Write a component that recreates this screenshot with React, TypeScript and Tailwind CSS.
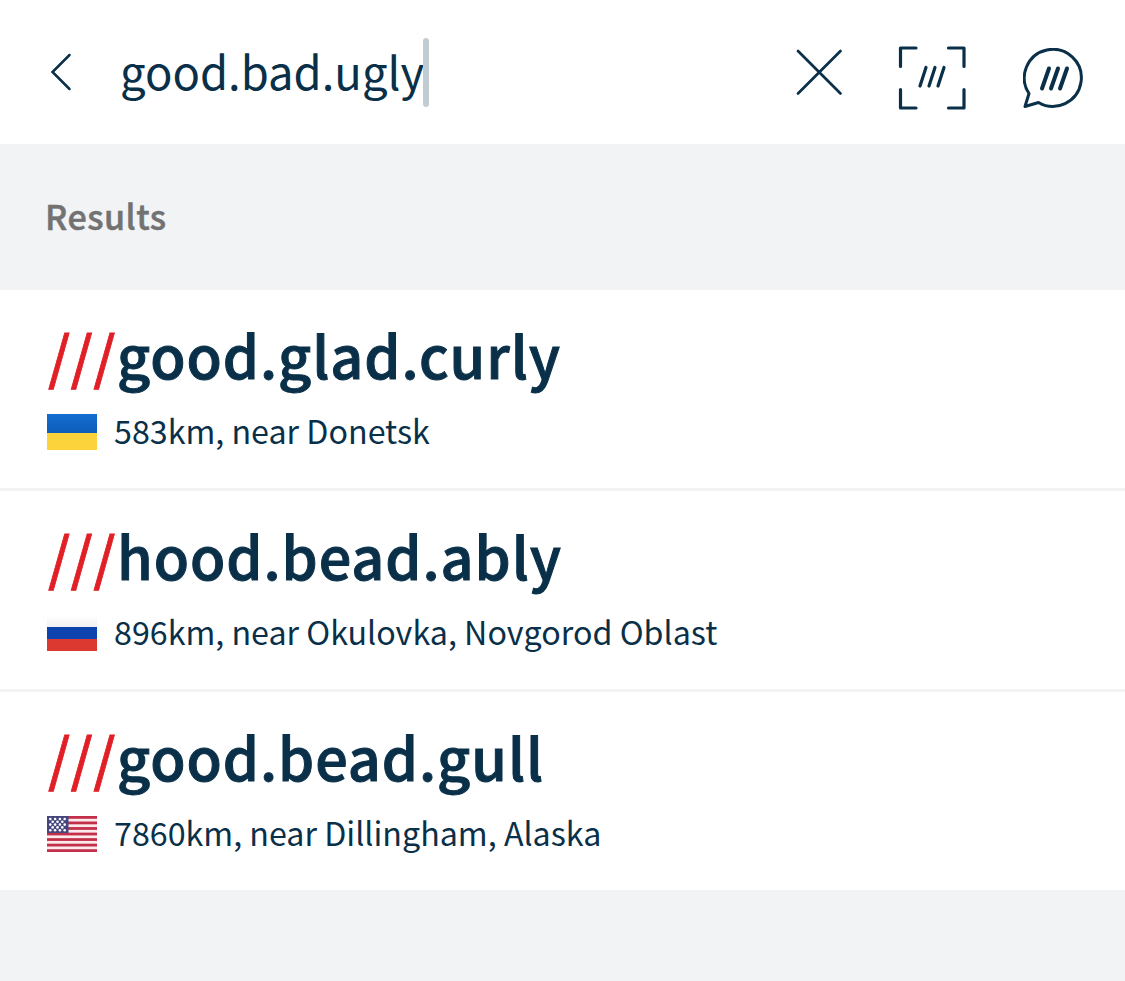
import type { ReactNode } from "react";

const font = "font-['Noto_Sans_CJK_SC','Noto_Sans',sans-serif]";

function BackIcon() {
  return (
    <svg width="22" height="38" viewBox="0 0 22 38" fill="none" stroke="currentColor" strokeWidth="2.5" strokeLinecap="round">
      <path d="M19.500 2 2.500 19l17 17" />
    </svg>
  );
}

function CloseIcon() {
  return (
    <svg width="48" height="48" viewBox="0 0 48 48" fill="none" stroke="currentColor" strokeWidth="2.7" strokeLinecap="round">
      <path d="M3 3l42.500 42.500M45.500 3 3 45.500" />
    </svg>
  );
}

function ScanIcon() {
  return (
    <svg width="68" height="64" viewBox="0 0 68 64" fill="none" stroke="currentColor" strokeWidth="3.2" strokeLinecap="round" strokeLinejoin="round">
      <path d="M2.500 20.500V2H18M50.500 2H66V20.500M66 43.500V62H50.500M18 62H2.500V43.500" />
      <path d="M28 21.500 22 40M37 21.500 31 40M46 21.500 40 40" />
    </svg>
  );
}

function ChatIcon() {
  return (
    <svg width="62" height="62" viewBox="0 0 62 62" fill="none" stroke="currentColor" strokeWidth="3" strokeLinecap="round" strokeLinejoin="round">
      <path d="M6 45.500A28.500 28.500 0 1 1 15.500 54.500L2 58.500Z" />
      <path d="M26 20.500 19 40.500M35 20.500 28 40.500M44 20.500 37 40.500" strokeWidth="4" />
    </svg>
  );
}

function UkraineFlag() {
  return (
    <svg width="50" height="36" viewBox="0 0 50 36">
      <defs>
        <linearGradient id="ua-blue" x2="0" y2="1">
          <stop stopColor="#156dd1" />
          <stop offset="1" stopColor="#0d5dba" />
        </linearGradient>
      </defs>
      <rect width="50" height="19" fill="url(#ua-blue)" />
      <rect y="19" width="50" height="17" fill="#fdd33c" />
    </svg>
  );
}

function RussiaFlag() {
  return (
    <svg width="50" height="36" viewBox="0 0 50 36">
      <defs>
        <linearGradient id="ru-white" x2="0" y2="1">
          <stop stopColor="#fff" />
          <stop offset="1" stopColor="#f1f1f1" />
        </linearGradient>
      </defs>
      <rect width="50" height="12" fill="url(#ru-white)" />
      <rect y="12" width="50" height="12" fill="#0c43ae" />
      <rect y="24" width="50" height="12" fill="#dc3a31" />
    </svg>
  );
}

function UsaFlag() {
  return (
    <svg width="50" height="36" viewBox="0 0 50 36">
      <rect width="50" height="36" fill="#fbe9ec" />
      {[0, 1, 2, 3, 4, 5, 6].map((i) => (
        <rect key={i} y={i * 5.54} width="50" height="2.77" fill="#c22f48" />
      ))}
      <rect width="21.500" height="17" fill="#46467f" />
      {[3, 5.8, 8.6, 11.4, 14.2].map((y, row) =>
        (row % 2 ? [5.7, 10.5, 15.3] : [3.3, 8.1, 12.9, 17.7]).map((x) => (
          <circle key={`${x}-${y}`} cx={x} cy={y} r="1.300" fill="#fff" />
        )),
      )}
    </svg>
  );
}

const results: { words: string; place: string; flag: ReactNode }[] = [
  { words: "good.glad.curly", place: "583km, near Donetsk", flag: <UkraineFlag /> },
  { words: "hood.bead.ably", place: "896km, near Okulovka, Novgorod Oblast", flag: <RussiaFlag /> },
  { words: "good.bead.gull", place: "7860km, near Dillingham, Alaska", flag: <UsaFlag /> },
];

export default function App() {
  return (
    <div className={`h-[981px] w-[1125px] overflow-hidden bg-[#f1f3f5] text-[#0a3049] ${font}`}>
      <header className="flex h-36 items-center bg-white pr-10 pl-[50px]">
        <BackIcon />
        <span className="-mt-0.5 ml-[48px] text-[45.4px] leading-none">good.bad.ugly</span>
        <span className="-ml-px h-[69px] w-1.5 rounded-full bg-[#c2ccd3]" />
        <div className="ml-auto flex items-center">
          <CloseIcon />
          <span className="mt-3 ml-[55px]">
            <ScanIcon />
          </span>
          <span className="mt-3.5 ml-[57px]">
            <ChatIcon />
          </span>
        </div>
      </header>
      <div className="flex h-[146px] items-center pb-1 pl-[45px] text-[34px] font-medium tracking-[0.5px] text-[#727272] [-webkit-text-stroke:0.5px_currentColor]">
        Results
      </div>
      {results.map((r) => (
        <div key={r.words} className="h-[201px] border-b-3 border-[#f1f3f5] bg-white px-[47px] pt-[30px]">
          <div className="flex h-[70px] items-center text-[57.5px] leading-none font-medium tracking-[0.95px]">
            <span className="w-[70px] pl-px tracking-[0.2px] text-[#e11f26] [-webkit-text-stroke:0.8px_currentColor]">///</span>
            <span className="[-webkit-text-stroke:1px_currentColor]">{r.words}</span>
          </div>
          <div className="mt-6 flex h-9 items-center gap-[17px] text-[32.23px] leading-none">
            {r.flag}
            <span className="pb-1">{r.place}</span>
          </div>
        </div>
      ))}
    </div>
  );
}
